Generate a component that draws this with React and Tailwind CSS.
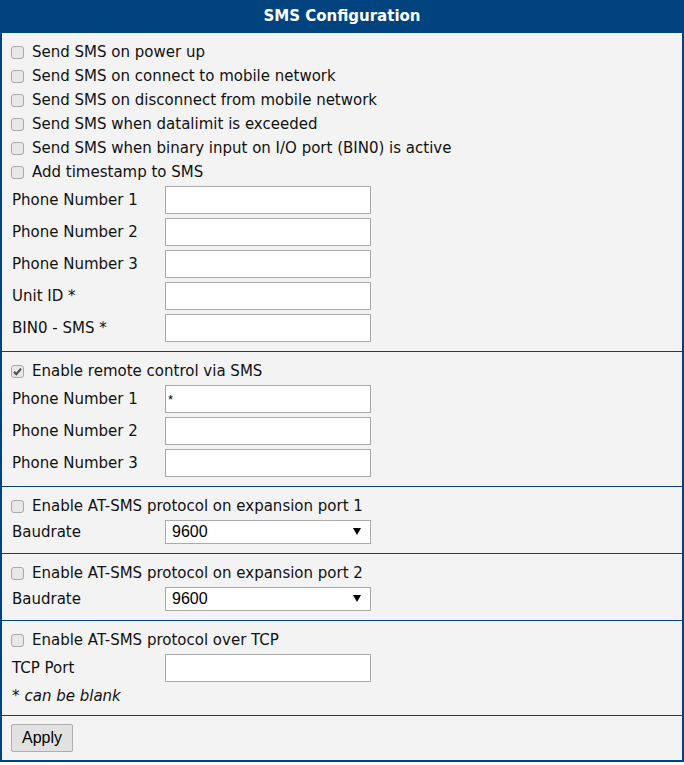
import React, { useState } from "react";

const font = { fontFamily: '"DejaVu Sans", Verdana, sans-serif' };
const arial = { fontFamily: '"Liberation Sans", Arial, sans-serif' };

function Check({ label, checked }) {
  const [on, setOn] = useState(!!checked);
  return (
    <label className="flex items-center h-6 pl-[9px] gap-[8px] cursor-pointer" onClick={() => setOn(!on)}>
      <span className="w-[13px] h-[13px] rounded-[3px] border border-[#a9a9a9] bg-[#e8e8e8] flex items-center justify-center shrink-0">
        {on && (
          <svg width="11" height="11" viewBox="0 0 11 11">
            <path d="M2 5.8 L4.3 8.2 L9 2.6" fill="none" stroke="#4a4a4a" strokeWidth="2" />
          </svg>
        )}
      </span>
      <span className="text-[15px] text-[#111] leading-none">{label}</span>
    </label>
  );
}

function Field({ label, value = "" }) {
  return (
    <div className="flex items-center h-8">
      <div className="w-[163px] pl-[10px] text-[15px] text-[#111]">{label}</div>
      <input
        defaultValue={value}
        className="w-[206px] h-[28px] border border-[#aaaaaa] bg-white px-[2px] text-[13px] outline-none"
        style={arial}
      />
    </div>
  );
}

function Baud() {
  return (
    <div className="flex items-center h-7">
      <div className="w-[163px] pl-[10px] text-[15px] text-[#111]">Baudrate</div>
      <div className="relative w-[206px] h-[24px] border border-[#aaaaaa] bg-white flex items-center pl-[6px] text-[16px] text-black" style={arial}>
        9600
        <span className="absolute right-[9px] top-[7px] w-0 h-0 border-l-[4px] border-r-[4px] border-t-[7px] border-l-transparent border-r-transparent border-t-black" />
      </div>
    </div>
  );
}

function Section({ children, last }) {
  return (
    <div className={`py-[7px] ${last ? "" : "border-b border-[#00437f]"}`}>{children}</div>
  );
}

export default function App() {
  return (
    <div className="w-[684px] h-[765px] bg-white" style={font}>
      <div className="w-[684px] border-x-2 border-b-2 border-[#00437f] bg-[#f3f3f3]">
        <div className="h-[33px] -mx-[2px] bg-[#00437f] text-white font-bold text-[15px] flex items-center justify-center">
          SMS Configuration
        </div>
        <Section>
          <Check label="Send SMS on power up" />
          <Check label="Send SMS on connect to mobile network" />
          <Check label="Send SMS on disconnect from mobile network" />
          <Check label="Send SMS when datalimit is exceeded" />
          <Check label="Send SMS when binary input on I/O port (BIN0) is active" />
          <Check label="Add timestamp to SMS" />
          <Field label="Phone Number 1" />
          <Field label="Phone Number 2" />
          <Field label="Phone Number 3" />
          <Field label="Unit ID *" />
          <Field label="BIN0 - SMS *" />
        </Section>
        <Section>
          <Check label="Enable remote control via SMS" checked />
          <Field label="Phone Number 1" value="*" />
          <Field label="Phone Number 2" />
          <Field label="Phone Number 3" />
        </Section>
        <Section>
          <Check label="Enable AT-SMS protocol on expansion port 1" />
          <Baud />
        </Section>
        <Section>
          <Check label="Enable AT-SMS protocol on expansion port 2" />
          <Baud />
        </Section>
        <Section>
          <Check label="Enable AT-SMS protocol over TCP" />
          <Field label="TCP Port" />
          <div className="h-6 pl-[10px] flex items-center text-[15px] text-[#111]">
            * <span className="italic ml-[5px]">can be blank</span>
          </div>
        </Section>
        <Section last>
          <div className="pl-[9px] py-[1px]">
            <button
              className="w-[62px] h-[28px] border border-[#adadad] rounded-[2px] bg-[#e1e1e1] text-[16px] text-black"
              style={arial}
            >
              Apply
            </button>
          </div>
        </Section>
      </div>
    </div>
  );
}
